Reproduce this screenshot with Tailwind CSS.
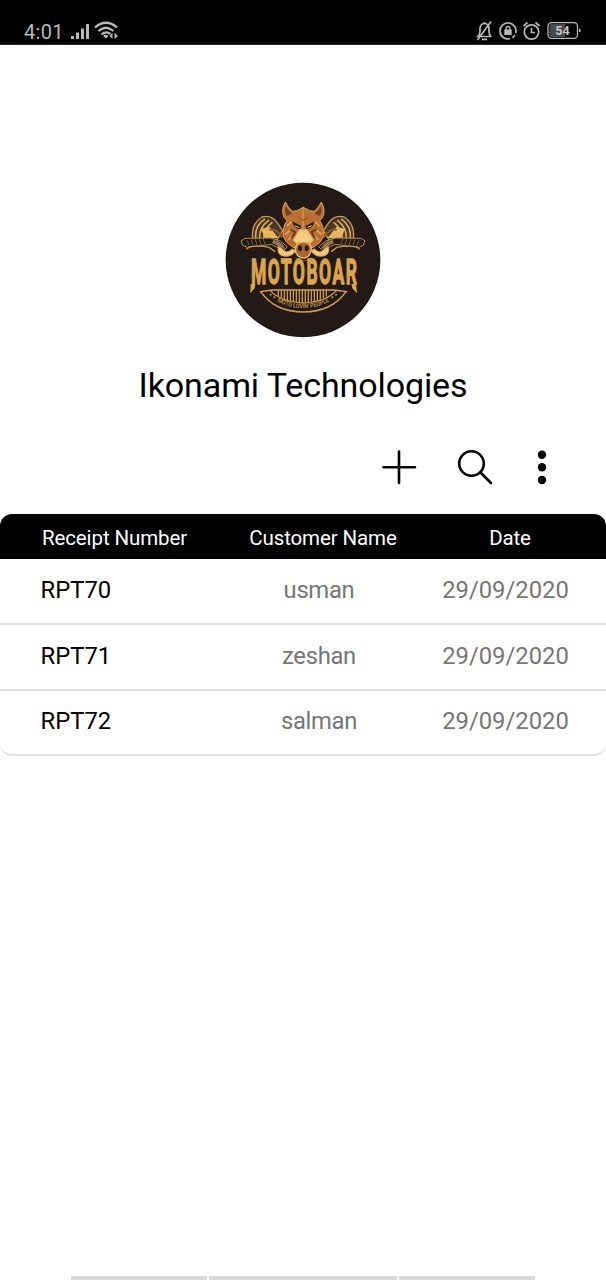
<!DOCTYPE html>
<html lang="en">
<head>
<meta charset="utf-8">
<title>Ikonami Technologies</title>
<script src="https://cdn.jsdelivr.net/npm/@tailwindcss/browser@4"></script>
</head>
<body class="bg-white font-['Roboto',sans-serif] text-black">
<div class="flex h-[1280px] w-[606px] flex-col overflow-hidden">
  <header class="flex h-[45px] shrink-0 items-end justify-between border-b border-[#2b2526] bg-black pl-6 pr-[25px] text-[#b9b9b9]">
    <div class="flex items-end pb-px">
      <span class="w-[46px] text-[20px] leading-[22px] tracking-[0.3px]">4:01</span>
      <svg class="h-6 w-[50px]" viewBox="0 0 50 24" fill="none">
        <g fill="#b9b9b9"><rect x="1" y="17" width="3" height="3"/><rect x="6" y="13.500" width="3" height="6.500"/><rect x="11" y="9.500" width="3" height="10.500"/><rect x="16" y="5" width="3" height="15"/></g>
        <g stroke="#b9b9b9" stroke-width="2.300"><path d="M25 8.500Q36 -1 47 8.500"/><path d="M28.500 12Q36 5.500 43.500 12"/><path d="M31.500 15.300Q36 11.500 40.500 15"/></g>
        <path d="M33 17Q36 14.500 38.500 17L36 19.500Z" fill="#b9b9b9"/>
        <path d="M42.500 13.500v6.500L39.500 17ZM44.500 13.500v6.500L48 17Z" fill="#b9b9b9"/>
      </svg>
    </div>
    <svg class="h-[24px] w-[106px]" viewBox="475 20 106 24" fill="none" stroke="#b9b9b9" stroke-width="1.700">
      <path d="M476.500 36.500h15M478 36.500q2-2 2-5v-2q0-6 4.500-6t4.500 6v2q0 3 2 5M484.500 23.500v-1.500M482 39.300h5M477.500 40 491 21.500"/>
      <path d="M510 38.700A8 8 0 1 1 515.700 33M515 35 512.500 38"/>
      <rect x="504.300" y="29.500" width="7.400" height="5.500" fill="#b9b9b9" stroke="none"/><path d="M506 30v-1.500a2 2 0 0 1 4 0V30" stroke-width="1.400"/>
      <circle cx="531.500" cy="32" r="7.200"/><path d="M531.500 28v4.500h3.500M523.500 26l4-3.500M539.500 26l-4-3.500"/>
      <rect x="548" y="22.700" width="29.500" height="15.600" rx="3.500" stroke-width="1.300"/>
      <path d="M551 24h14v13h-14q-1.500 0-1.500-1.500v-10q0-1.500 1.500-1.500Z" fill="#4a4a4a" stroke="none"/>
      <rect x="579" y="29" width="1.500" height="3" fill="#b9b9b9" stroke="none"/>
      <text x="562.500" y="35.200" text-anchor="middle" font-size="12.500" font-weight="700" fill="#c4c4c4" stroke="none">54</text>
    </svg>
  </header>

  <main class="flex flex-col pt-[133px]">
    <svg class="h-[164px] w-[166px] self-center" viewBox="0 0 498 492" fill="none" stroke-linejoin="round" stroke-linecap="round">
      <circle cx="249" cy="246" r="232" fill="#231a18"/>
      <defs>
        <g id="engine">
          <path d="M98 184Q92 138 126 117Q154 109 171 133L188 158L170 187Z" fill="#4b3524" stroke="#c99b50" stroke-width="4"/>
          <path d="M107 181Q104 143 133 124M119 182Q117 149 145 128M131 180Q132 153 156 134" stroke="#d8ad5c" stroke-width="5"/>
          <path d="M123 153L148 146L175 179L136 185Z" fill="#e3b65f"/>
          <path d="M150 155Q168 151 185 176" stroke="#8d5b2b" stroke-width="6"/>
          <path d="M64 188L75 181L151 180L181 189L202 206L190 218L154 199L82 208L69 202Z" fill="#231a18" stroke="#b98a45" stroke-width="3"/>
          <path d="M82 188l5 14M94 186l5 15M106 185l5 15M118 184l5 15M130 183l5 15" stroke="#76573a" stroke-width="3"/>
          <path d="M80 213L90 206Q119 202 147 208L164 220" stroke="#c99344" stroke-width="4"/>
          <path d="M160 186Q185 188 195 211L179 216Q174 200 156 196Z" fill="#8c7650"/>
        </g>
        <g id="face">
          <path d="M250 88L231 98L217 100Q203 88 196 72Q181 98 193 120L201 127Q188 147 189 174L200 193L218 207L250 223Z" fill="#b96f32" stroke="#dda34f" stroke-width="3"/>
          <path d="M198 85Q192 103 201 114L216 107Q204 98 198 85Z" fill="#744122"/>
          <path d="M203 142L214 132M197 168L211 156M207 183L219 173" stroke="#e0a657" stroke-width="5"/>
          <path d="M216 130L243 143L241 153Q225 156 216 130Z" fill="#2a1c17"/>
          <path d="M226 144L237 148" stroke="#e8bd67" stroke-width="3"/>
          <path d="M239 154L219 186L230 197L250 171V155Z" fill="#f2c979"/>
          <path d="M212 155L226 162L216 179" stroke="#5e3420" stroke-width="5"/>
          <path d="M175 206Q169 230 190 234Q214 239 227 218L216 213Q201 229 190 216Z" fill="#f0ca7e" stroke="#d39a45" stroke-width="3"/>
        </g>
      </defs>
      <use href="#engine"/><use href="#engine" transform="translate(498 0) scale(-1 1)"/>
      <use href="#face"/><use href="#face" transform="translate(500 0) scale(-1 1)"/>
      <path d="M236 119l14 8 14-8" stroke="#915126" stroke-width="3"/>
      <path d="M250 158L231 188L250 202L269 188Z" fill="#f4cf87"/>
      <path d="M235 196Q250 187 265 196Q278 205 272 223Q264 241 250 240Q235 240 227 223Q223 206 235 196Z" fill="#a8652f" stroke="#f0bd68" stroke-width="4"/>
      <ellipse cx="240" cy="211" rx="6" ry="9" fill="#2b1b16"/><ellipse cx="260" cy="211" rx="6" ry="9" fill="#2b1b16"/>
      <path d="M228 240Q250 257 272 240" stroke="#794520" stroke-width="4"/>
      <g fill="#dba54b">
        <path d="M92 318H106L104 330L91 346ZM394 318H408L411 346L397 331Z"/>
        <text x="93" y="319" font-size="106" font-weight="700" letter-spacing="9" stroke="#dba54b" stroke-width="4" textLength="322" lengthAdjust="spacingAndGlyphs">MOTOBOAR</text>
      </g>
      <path d="M121 341L157 336H343L380 341" stroke="#dba54b" stroke-width="4"/>
      <path d="M123 342Q164 401 250 402Q336 401 377 342M151 338Q181 371 250 375Q319 371 349 338" stroke="#c99a4d" stroke-width="4"/>
      <path d="M175 338v15M184 338v20M193 338v24M202 338v27M211 338v29M220 338v31M229 338v32M238 338v33M247 338v33M256 338v33M265 338v33M274 338v32M283 338v30M292 338v28M301 338v25M310 338v21M319 338v16" stroke="#c99a4d" stroke-width="4"/>
      <path id="motto" d="M171 370Q250 412 329 370"/>
      <text font-size="19" font-weight="700" fill="#b98a48"><textPath href="#motto" textLength="164" lengthAdjust="spacingAndGlyphs">MOTO LOVIN' PEOPLE</textPath></text>
      <g fill="#c99a4d"><circle cx="152" cy="350" r="3"/><circle cx="163" cy="358" r="3"/><circle cx="337" cy="358" r="3"/><circle cx="348" cy="350" r="3"/></g>
    </svg>
    <h1 class="mt-[23px] text-center text-[34px] leading-10 tracking-[-0.1px]">Ikonami Technologies</h1>

    <nav class="mt-[42px] flex h-[40px] items-center justify-end gap-[38px] pr-[54px]" aria-label="Receipt actions">
      <svg class="size-[38px]" viewBox="0 0 38 38" fill="none" stroke="#000" stroke-width="2.600" stroke-linecap="round"><path d="M19 3.500v31.500M3.500 19.300h31.500"/></svg>
      <svg class="size-[38px]" viewBox="0 0 38 38" fill="none" stroke="#000" stroke-width="2.600" stroke-linecap="round"><circle cx="15.500" cy="15.500" r="12.300"/><path d="M24.500 24.500 35 35"/></svg>
      <svg class="h-[38px] w-[20px]" viewBox="0 0 20 38"><circle cx="10" cy="6.700" r="4.200"/><circle cx="10" cy="19.300" r="4.200"/><circle cx="10" cy="32" r="4.200"/></svg>
    </nav>

    <section class="mt-[27px] overflow-hidden rounded-xl border-b-2 border-[#e0e0e0]">
      <div class="grid h-[45px] grid-cols-[229px_188px_189px] items-center bg-black text-center text-[20.500px] tracking-[-0.11px] text-white">
        <div class="pt-[4px]">Receipt Number</div><div class="pt-[4px]">Customer Name</div><div class="pr-[3px] pt-[4px]">Date</div>
      </div>
      <div class="divide-y-2 divide-[#e0e0e0] text-[23.800px] text-[#767676]">
        <div class="grid h-[66px] grid-cols-[229px_180px_197px] items-center text-center"><div class="pl-[40.500px] text-left text-black">RPT70</div><div class="tracking-[-0.3px]">usman</div><div class="pr-[4px]">29/09/2020</div></div>
        <div class="grid h-[66px] grid-cols-[229px_180px_197px] items-center pb-px text-center"><div class="pl-[40.500px] text-left text-black">RPT71</div><div class="tracking-[-0.3px]">zeshan</div><div class="pr-[4px]">29/09/2020</div></div>
        <div class="grid h-[63px] grid-cols-[229px_180px_197px] items-center pb-px text-center"><div class="pl-[40.500px] text-left text-black">RPT72</div><div class="tracking-[-0.3px]">salman</div><div class="pr-[4px]">29/09/2020</div></div>
      </div>
    </section>
  </main>
  <footer class="mt-auto flex h-[4px] shrink-0 gap-[2px] pl-[71px]"><div class="w-[136px] bg-[#d8d8d8]"></div><div class="w-[188px] bg-[#d8d8d8]"></div><div class="w-[136px] bg-[#d8d8d8]"></div></footer>
</div>
</body>
</html>
